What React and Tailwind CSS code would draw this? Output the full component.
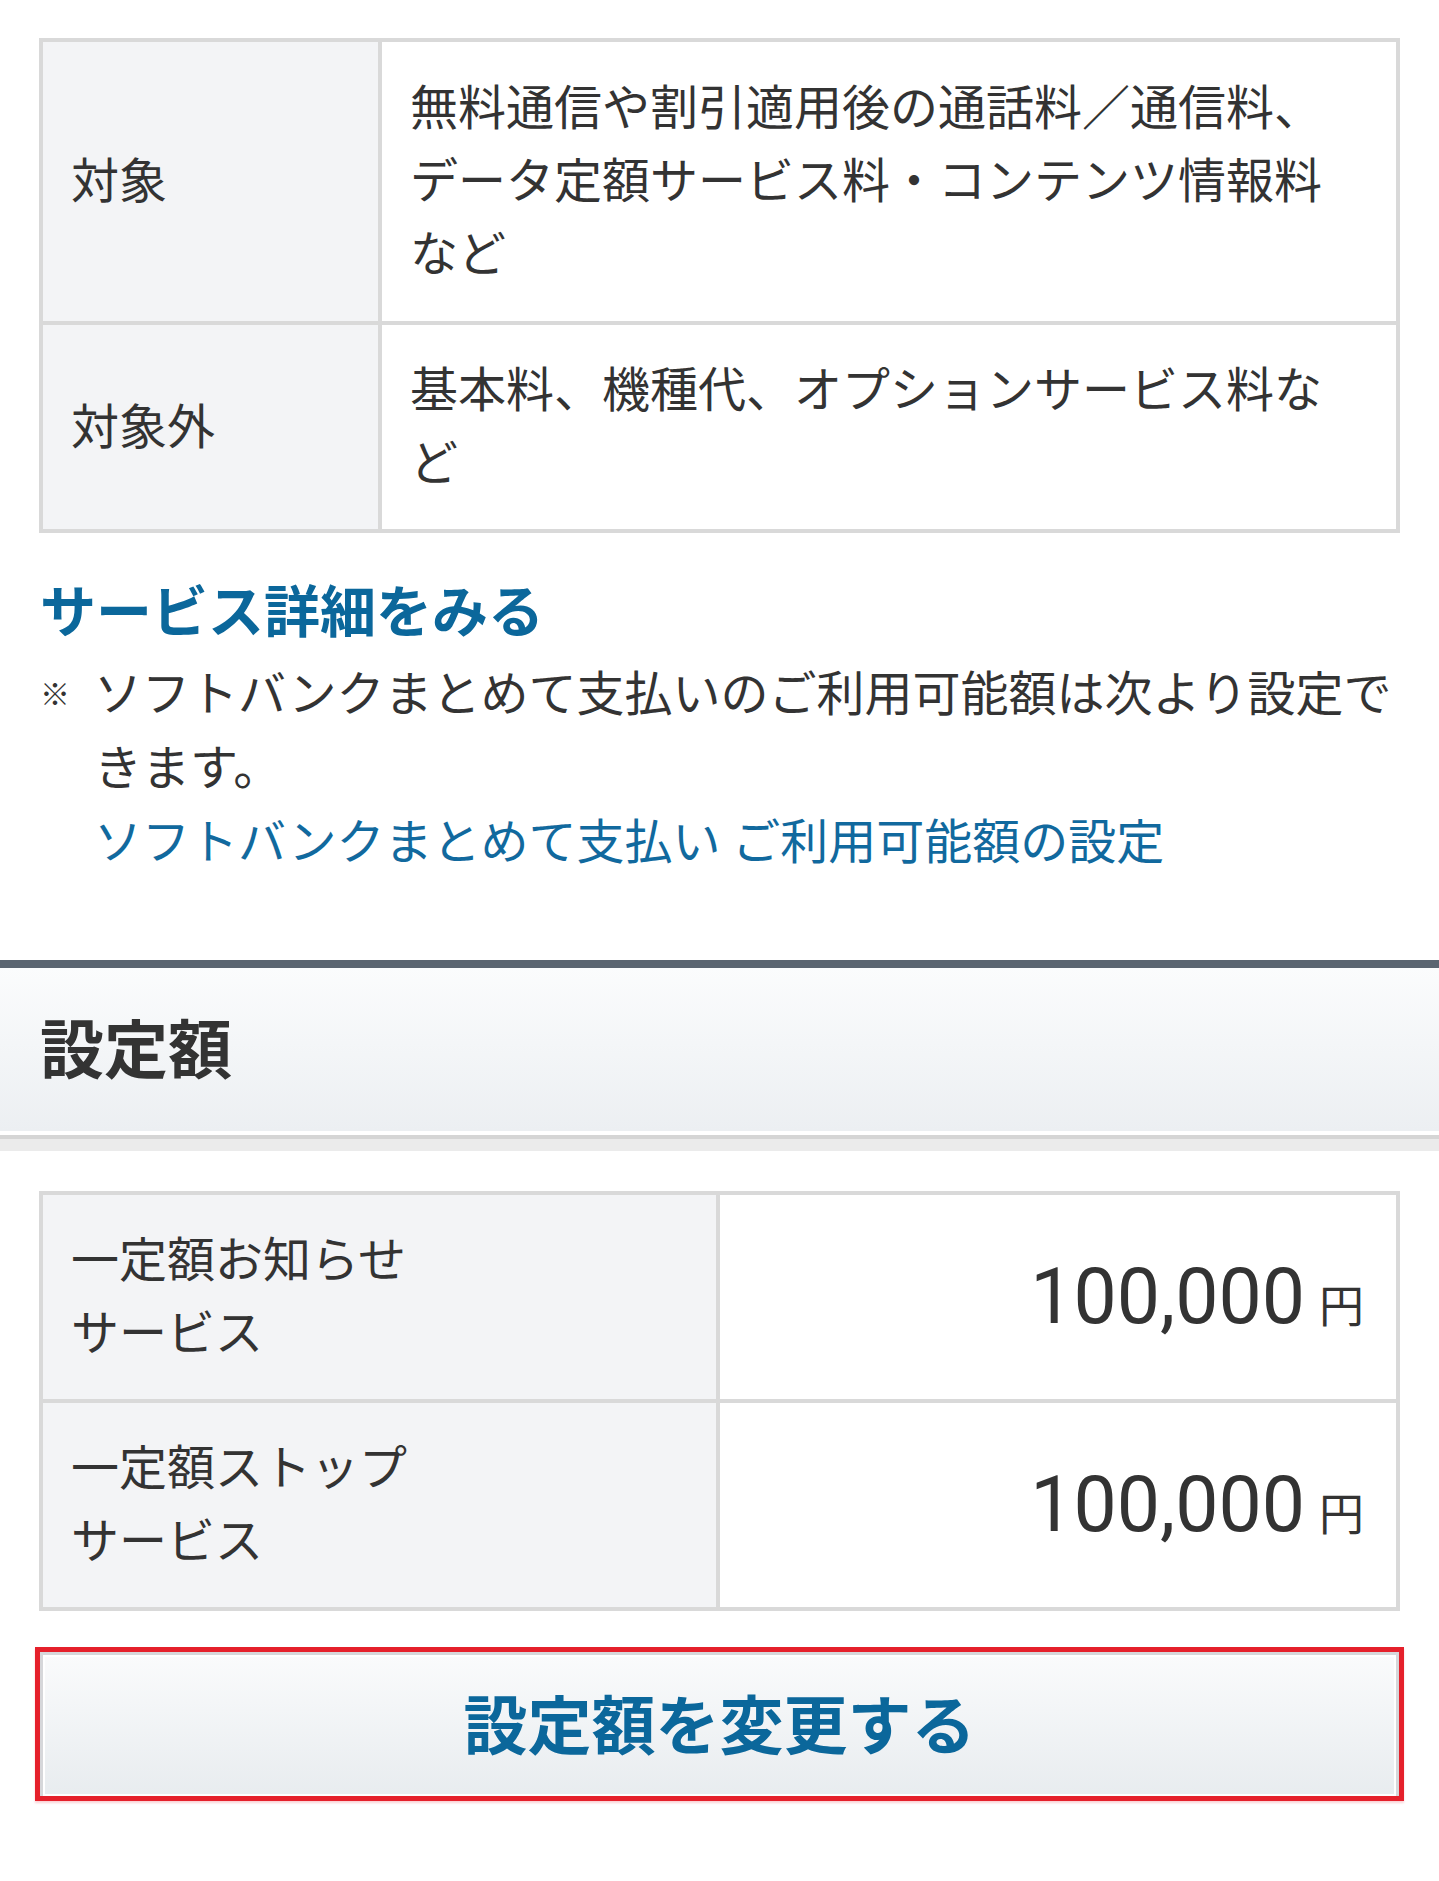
export default function App() {
  const font = "font-['Roboto','Noto_Sans_CJK_JP',sans-serif]";

  return (
    <div className={`min-h-[1881px] w-full bg-white text-[#333333] ${font}`}>
      {/* 対象 / 対象外 table */}
      <div className="px-[39px] pt-[38px]">
        <div className="border-4 border-[#d9d9d9] text-[48px] leading-[73px]">
          <div className="flex">
            <div className="w-[339px] shrink-0 flex items-center border-r-4 border-[#d9d9d9] bg-[#f3f4f6] px-[28px]">
              対象
            </div>
            <div className="flex-1 px-[28px] py-[30px]">
              無料通信や割引適用後の通話料／通信料、
              <br />
              データ定額サービス料・コンテンツ情報料
              <br />
              など
            </div>
          </div>
          <div className="flex border-t-4 border-[#d9d9d9]">
            <div className="w-[339px] shrink-0 flex items-center border-r-4 border-[#d9d9d9] bg-[#f3f4f6] px-[28px]">
              対象外
            </div>
            <div className="flex-1 px-[28px] py-[29px]">
              基本料、機種代、オプションサービス料な
              <br />
              ど
            </div>
          </div>
        </div>
      </div>

      {/* Links and note */}
      <div className="px-[40px] pt-[40px]">
        <a href="#" className="block text-[56px] font-bold leading-[81px] text-[#0b679b]">
          サービス詳細をみる
        </a>
        <div className="mt-[4px] flex text-[48px] leading-[74px]">
          <span className="w-[54px] shrink-0 text-[30px] font-bold">※</span>
          <div>
            ソフトバンクまとめて支払いのご利用可能額は次より設定で
            <br />
            きます。
            <br />
            <a href="#" className="text-[#11699e]">
              ソフトバンクまとめて支払い ご利用可能額の設定
            </a>
          </div>
        </div>
      </div>

      {/* Section header */}
      <div className="mt-[80px]">
        <div className="flex h-[171px] items-center border-t-8 border-[#5b6571] bg-gradient-to-b from-[#fbfcfd] to-[#eceff2] px-[40px]">
          <h2 className="pt-[4px] text-[64px] font-bold leading-none text-[#333333]">設定額</h2>
        </div>
        <div className="h-[4px] bg-white" />
        <div className="h-[4px] bg-[#d5d5d5]" />
        <div className="h-[12px] bg-[#ebebeb]" />
      </div>

      {/* 設定額 table */}
      <div className="px-[39px] pt-[40px]">
        <div className="border-4 border-[#d9d9d9]">
          {[
            ["一定額お知らせ", "サービス"],
            ["一定額ストップ", "サービス"],
          ].map((label, i) => (
            <div key={i} className={`flex ${i > 0 ? "border-t-4 border-[#d9d9d9]" : ""}`}>
              <div className="w-1/2 border-r-4 border-[#d9d9d9] bg-[#f3f4f6] px-[28px] py-[29px] text-[48px] leading-[73px]">
                {label[0]}
                <br />
                {label[1]}
              </div>
              <div className="flex w-1/2 items-center justify-end pr-[32px]">
                <div className="flex items-baseline">
                  <span className="text-[77px] leading-none">100,000</span>
                  <span className="ml-[14px] text-[45px] leading-none">円</span>
                </div>
              </div>
            </div>
          ))}
        </div>
      </div>

      {/* Change button */}
      <div className="mx-[35px] mt-[36px] border-[5px] border-[#e5202b] shadow-[0_2px_2px_rgba(229,32,43,0.2)]">
        <button className="flex h-[144px] w-full items-center justify-center border-x-[3px] border-t-[3px] border-[#d6d7da] bg-gradient-to-b from-[#fafbfc] to-[#e8ecef] pt-[4px] text-[64px] font-bold text-[#0b679b] shadow-[inset_2px_2px_0_#ffffff,inset_-2px_-2px_0_#ffffff]">
          設定額を変更する
        </button>
      </div>
    </div>
  );
}
